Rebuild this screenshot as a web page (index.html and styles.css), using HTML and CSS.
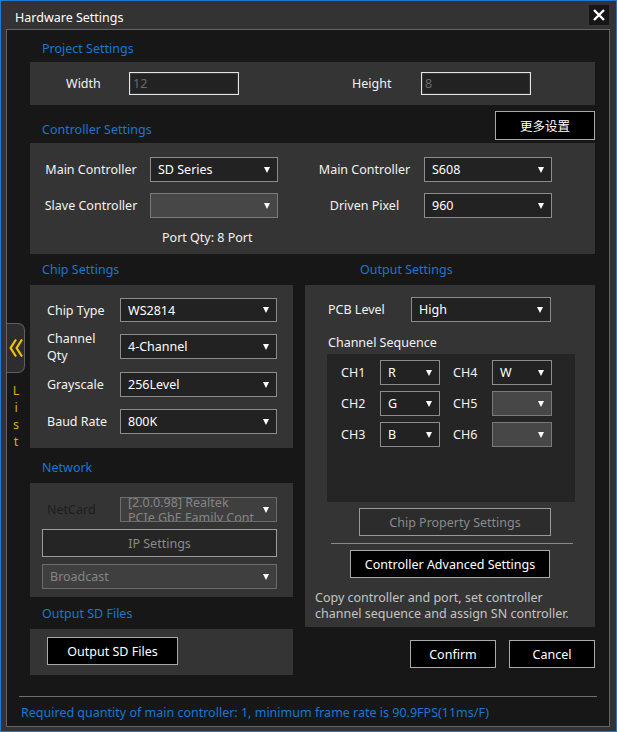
FILE: index.html
```html
<!DOCTYPE html>
<html>
<head>
<meta charset="utf-8">
<link rel="stylesheet" href="styles.css">
</head>
<body>
<div class="window">
  <div class="titlebar">
    <span class="title">Hardware Settings</span>
    <div class="close">
      <svg width="12" height="12" viewBox="0 0 12 12"><path d="M1 1 L11 11 M11 1 L1 11" stroke="#fff" stroke-width="2.4" fill="none"/></svg>
    </div>
  </div>
  <div class="client">
    <div class="main">
      <div class="hdr">Project Settings</div>
      <div class="panel project">
        <span class="plbl plbl-w">Width</span>
        <div class="tinput">12</div>
        <span class="plbl plbl-h">Height</span>
        <div class="tinput">8</div>
      </div>

      <div class="hdr-row">
        <div class="hdr">Controller Settings</div>
        <div class="btn btn-more">更多设置</div>
      </div>
      <div class="panel ctrl">
        <div class="ctrl-grid">
          <span class="clbl">Main Controller</span>
          <div class="sel"><span>SD Series</span></div>
          <span></span>
          <span class="clbl">Main Controller</span>
          <div class="sel"><span>S608</span></div>

          <span class="clbl">Slave Controller</span>
          <div class="sel dis"><span></span></div>
          <span></span>
          <span class="clbl">Driven Pixel</span>
          <div class="sel"><span>960</span></div>

          <span></span>
          <div class="portqty">Port Qty: 8 Port</div>
        </div>
      </div>

      <div class="cols">
        <div class="col-left">
          <div class="hdr">Chip Settings</div>
          <div class="panel chip">
            <div class="frow r1"><span class="flbl">Chip Type</span><div class="sel w157 h24"><span>WS2814</span></div></div>
            <div class="frow r2"><span class="flbl">Channel<br>Qty</span><div class="sel w157"><span>4-Channel</span></div></div>
            <div class="frow r3"><span class="flbl">Grayscale</span><div class="sel w157"><span>256Level</span></div></div>
            <div class="frow r4"><span class="flbl">Baud Rate</span><div class="sel w157"><span>800K</span></div></div>
          </div>

          <div class="hdr hdr-net">Network</div>
          <div class="panel net">
            <div class="frow"><span class="flbl netlbl">NetCard</span><div class="sel w157 disab netsel"><span class="two">[2.0.0.98] Realtek<br>PCIe GbE Family Cont</span></div></div>
            <div class="btn ipbtn">IP Settings</div>
            <div class="sel disab bcast"><span>Broadcast</span></div>
          </div>

          <div class="hdr hdr-sd">Output SD Files</div>
          <div class="panel sd">
            <div class="btn sdbtn">Output SD Files</div>
          </div>
        </div>

        <div class="col-right">
          <div class="hdr hdr-out">Output Settings</div>
          <div class="panel out">
            <div class="frow pcb"><span class="pcblbl">PCB Level</span><div class="sel w140"><span>High</span></div></div>
            <div class="seqlbl">Channel Sequence</div>
            <div class="seqbox">
              <span class="chl">CH1</span><div class="sel chsel"><span>R</span></div><span></span>
              <span class="chl">CH4</span><div class="sel chsel"><span>W</span></div>
              <span class="chl">CH2</span><div class="sel chsel"><span>G</span></div><span></span>
              <span class="chl">CH5</span><div class="sel chsel dis"><span></span></div>
              <span class="chl">CH3</span><div class="sel chsel"><span>B</span></div><span></span>
              <span class="chl">CH6</span><div class="sel chsel dis"><span></span></div>
            </div>
            <div class="btn chipbtn">Chip Property Settings</div>
            <div class="hsep"></div>
            <div class="btn advbtn">Controller Advanced Settings</div>
            <div class="desc">Copy controller and port, set controller<br>channel sequence and assign SN controller.</div>
          </div>
          <div class="btnrow">
            <div class="btn okbtn">Confirm</div>
            <div class="btn okbtn">Cancel</div>
          </div>
        </div>
      </div>
    </div>

    <div class="sep"></div>
    <div class="status">Required quantity of main controller: 1, minimum frame rate is 90.9FPS(11ms/F)</div>

    <div class="listtab">
      <svg width="14" height="20" viewBox="0 0 14 20"><path d="M7 1.5 L1.6 10 L7 18.5 M13 1.5 L7.6 10 L13 18.5" stroke="#f3c300" stroke-width="2.2" fill="none"/></svg>
    </div>
    <div class="listtxt">L<br>i<br>s<br>t</div>
  </div>
</div>
</body>
</html>
```

FILE: styles.css
```css
* { box-sizing: border-box; }
html, body { margin: 0; padding: 0; }
body {
  width: 617px; height: 732px; overflow: hidden;
  background: #333;
  font-family: "Noto Sans", "Noto Sans CJK SC", sans-serif;
  font-size: 12.5px;
  color: #f2f2f2;
}
.window {
  width: 617px; height: 732px;
  border: 1px solid #1b7ad3;
  background: #333;
  display: flex; flex-direction: column;
}
.titlebar {
  height: 28px; flex: none;
  display: flex; align-items: center; justify-content: space-between;
  padding: 0 7px 0 14px;
}
.title { margin-top: 4px; color: #fff; font-size: 12.5px; }
.close {
  width: 20px; height: 20px; background: #161616;
  display: flex; align-items: center; justify-content: center;
}
.client {
  flex: 1;
  margin: 0 6px 4px 5px;
  border: 1px solid #656565;
  background: #171717;
  position: relative;
  display: flex; flex-direction: column;
}
.main { padding: 9px 14px 0 23px; }

.hdr { color: #1677d4; line-height: 20px; height: 20px; padding-left: 12px; }
.panel { background: #343434; }

.project {
  margin-top: 3px; height: 43px;
  display: flex; align-items: center;
  padding-left: 36px;
}
.plbl { display: block; }
.plbl-w { width: 63px; }
.plbl-h { width: 69px; margin-left: 113px; }
.tinput {
  width: 110px; height: 23px;
  border: 1px solid #e4e4e4;
  box-shadow: inset 0 0 0 1px #3a3a3a;
  background: #222;
  color: #6a6a6a;
  padding-left: 3px; line-height: 21px;
}

.hdr-row {
  margin-top: 6px; height: 29px;
  display: flex; justify-content: space-between; align-items: flex-end;
}
.btn {
  background: #000; border: 1px solid #a9a9a9; color: #fff;
  display: flex; align-items: center; justify-content: center;
  height: 28px;
}
.btn-more { width: 100px; height: 29px; font-family: "Noto Sans CJK SC", sans-serif; font-size: 12.5px; }

.ctrl { margin-top: 3px; height: 111px; padding: 14px 0 0 2px; }
.ctrl-grid {
  display: grid;
  grid-template-columns: 118px 128px 27px 119px 128px;
  grid-template-rows: 25px 25px 20px;
  row-gap: 11px;
  align-items: center;
}
.ctrl-grid > .portqty { margin-top: -3px; }
.clbl { text-align: center; }
.portqty { padding-left: 12px; line-height: 20px; }

.sel {
  position: relative;
  height: 25px;
  background: #222;
  border: 1px solid #8c8c8c;
  display: flex; align-items: center;
  padding-left: 7px;
  color: #fff;
  white-space: nowrap; overflow: hidden;
}
.sel::after {
  content: "";
  position: absolute; right: 7px; top: 50%;
  margin-top: -3px;
  border-left: 3px solid transparent;
  border-right: 3px solid transparent;
  border-top: 6px solid #fff;
}
.sel.dis { background: #474747; border-color: #7a7a7a; }
.sel.disab { background: #3f3f3f; border-color: #6c6c6c; color: #858585; }
.w157 { width: 157px; }
.w140 { width: 140px; }
.h24 { height: 24px; }

.cols {
  margin-top: 6px;
  display: grid;
  grid-template-columns: 263px 290px;
  column-gap: 12px;
  align-items: start;
}

.chip { margin-top: 5px; height: 163px; padding: 13px 16px 0 17px; }
.frow { display: flex; align-items: center; }
.flbl { width: 73px; line-height: 17px; }
.chip .r1 { height: 24px; }
.chip .r2 { height: 25px; margin-top: 12px; }
.chip .r3 { height: 25px; margin-top: 13px; }
.chip .r4 { height: 25px; margin-top: 12px; }

.hdr-net { margin-top: 10px; }
.net { margin-top: 5px; height: 114px; padding: 14px 16px 0 12px; }
.net .frow { height: 25px; }
.netlbl { color: #1e1e1e; padding-left: 5px; width: 78px; }
.two { line-height: 15px; display: block; width: 132px; overflow: hidden; }
.ipbtn { margin-top: 7px; width: 235px; background: #252525; border-color: #9d9d9d; color: #8a8a8a; }
.bcast { margin-top: 7px; width: 235px; color: #7a7a7a; }

.hdr-sd { margin-top: 7px; }
.sd { margin-top: 5px; height: 46px; padding: 8px 0 0 17px; }
.sdbtn { width: 131px; }

.hdr-out { padding-left: 55px; }
.out { margin-top: 5px; height: 342px; padding-top: 12px; }
.pcb { height: 25px; }
.pcblbl { width: 106px; padding-left: 23px; }
.seqlbl { margin-top: 13px; line-height: 16px; padding-left: 23px; }
.seqbox {
  margin: 3px 0 0 22px;
  width: 248px; height: 148px;
  background: #252525;
  padding: 6px 0 0 14px;
  display: grid;
  grid-template-columns: 39px 60px 13px 39px 60px;
  grid-template-rows: 25px 25px 25px;
  row-gap: 6px;
  align-content: start;
  align-items: center;
}
.chsel { width: 60px; }
.chipbtn {
  margin: 6px 0 0 54px; width: 192px;
  background: #2c2c2c; border-color: #989898; color: #8a8a8a;
}
.hsep { margin: 7px 0 0 26px; width: 242px; height: 1px; background: #8a8a8a; }
.advbtn { margin: 6px 0 0 45px; width: 200px; }
.desc { margin-top: 12px; padding-left: 10px; line-height: 16px; color: #c4c4c4; }

.btnrow { margin-top: 13px; display: flex; justify-content: flex-end; column-gap: 13px; }
.okbtn { width: 86px; }

.sep { margin: 21px 12px 0 12px; height: 1px; background: #6e6e6e; }
.status { margin: 8px 0 0 14px; line-height: 16px; color: #1677d4; }

.listtab {
  position: absolute; left: 0; top: 293px;
  width: 18px; height: 50px;
  background: #2d2d2d;
  border: 1px solid #5e5e5e; border-left: none;
  border-radius: 0 7px 7px 0;
  display: flex; align-items: center; justify-content: center;
}
.listtxt {
  position: absolute; left: 0; top: 352px;
  width: 18px; text-align: center;
  line-height: 17px; color: #dcb000; font-size: 12.5px;
}
```
